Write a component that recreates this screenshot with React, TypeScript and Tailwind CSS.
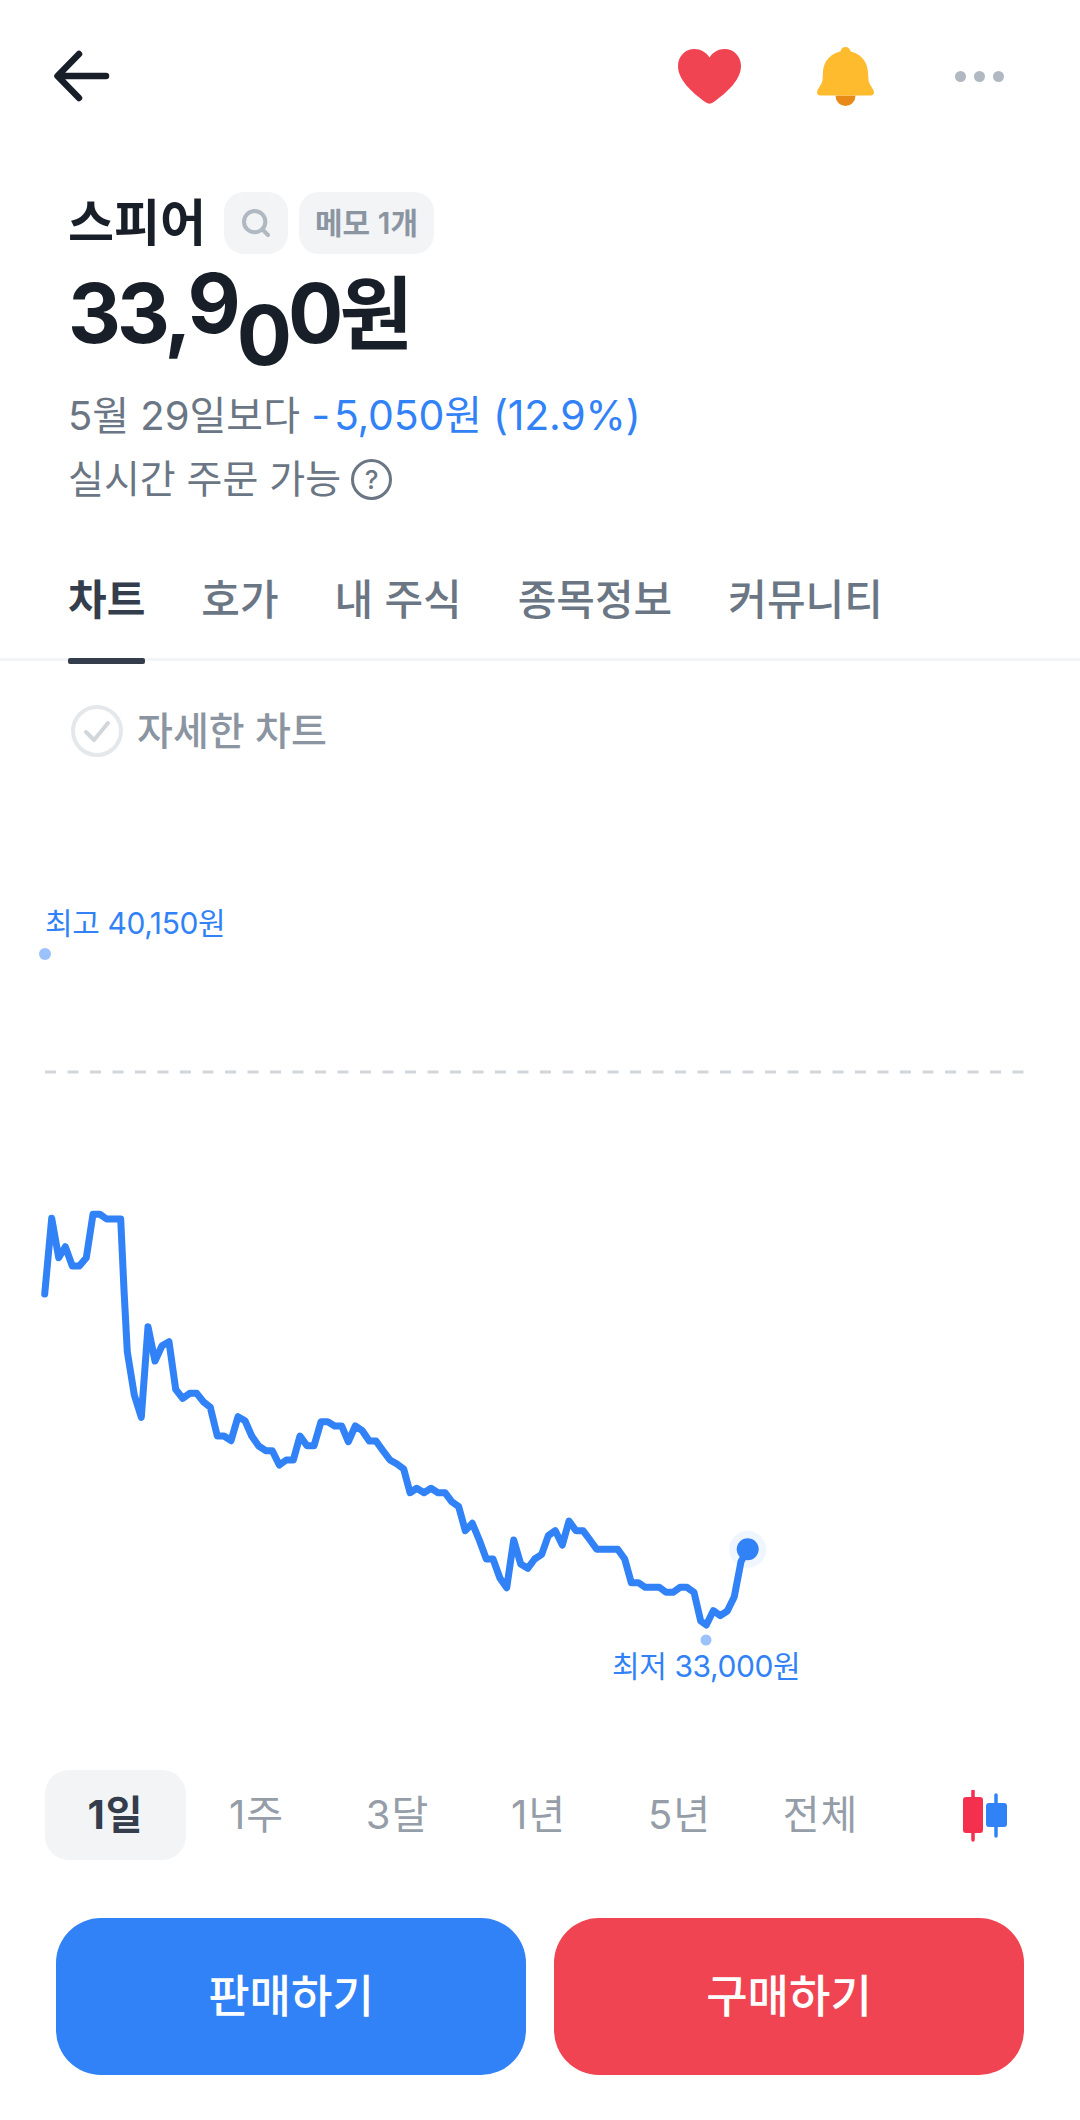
import { Search } from "lucide-react";

const tabs = ["차트", "호가", "내 주식", "종목정보", "커뮤니티"];
const periods = ["1일", "1주", "3달", "1년", "5년", "전체"];

const pricePoints =
  "44.7,1294 51.7,1218.3 58.7,1257.7 65.3,1246.7 72.3,1266 79.3,1266 86.3,1257.7 93,1214.3 100,1214.3 106.7,1219 120.7,1219 124,1290 127.3,1351.7 134.3,1395 141.3,1417.3 148,1326.7 155,1361 162,1345.7 169,1341.7 175.7,1389.3 182.7,1398.3 189.7,1393.3 196.7,1393.3 203.3,1401.7 210.3,1407.3 217.3,1436 224,1436 231,1440.7 238,1416.7 245,1420.7 251.7,1436 258.7,1446 265.7,1450.7 272.3,1450.7 279.3,1465 286.3,1460 293.3,1460 300,1436 307,1445.7 314,1445.7 321,1421.7 327.7,1421.7 334.7,1426 341.7,1426 348.3,1441.7 355.3,1426 362.3,1430.7 369.3,1441 376,1441 383,1450.7 390,1460 397,1464 403.7,1469 410,1492.7 416.7,1488.3 424,1492.7 431,1488.3 438,1492.7 445,1492.7 451.7,1501.7 458.7,1506.7 465.3,1530.7 472.3,1523.3 479.3,1540 486.3,1559 493,1559 500,1578.3 506.7,1587.7 513.7,1540 520.7,1564 527.7,1568.3 534.7,1559 541.7,1554.3 548.3,1535.7 555.3,1530.7 562.3,1545 569,1521 576,1530.7 583,1530.7 590,1540 596.7,1549.3 617.7,1549.3 624.7,1559 631.3,1582.7 638.3,1582.7 645.3,1587.3 659.3,1587.3 666,1592.3 673,1592.3 680,1587.3 687,1587.3 694,1592.3 700.7,1621 706.3,1625 713.3,1610.7 720.3,1615.7 727.3,1611 734.3,1596.7 741,1561.7 747.7,1549.3";

function Header() {
  return (
    <header className="flex h-[152px] items-center justify-between pl-[54px] pr-[76px]">
      <svg width="56" height="52" viewBox="0 0 56 52" fill="none" stroke="#191f28" strokeWidth="6.500" strokeLinecap="round" strokeLinejoin="round">
        <path d="M52 26H4M25 4 3.500 26 25 48" />
      </svg>
      <div className="flex items-center">
        <svg width="63" height="55" viewBox="0 0 63 55" fill="#f04452">
          <path d="M31.500 8.500C28 3 22.500 0 16.500 0 7 0 0 7.500 0 17c0 16 19 30 28 36.500 2 1.500 5 1.500 7 0C44 47 63 33 63 17 63 7.500 56 0 46.500 0 40.500 0 35 3 31.500 8.500Z" />
        </svg>
        <svg className="ml-[76px]" width="57" height="59" viewBox="0 0 57 59">
          <path d="M18.500 48.500a10 10.500 0 0 0 20 0Z" fill="#e88a17" />
          <circle cx="28.500" cy="5" r="5" fill="#ffbb2e" />
          <path d="M28.500 4C17 4 6.500 12 6 25l-.5 8C5 38 0 42 0 45.500 0 47.500 1.500 48.500 3.500 48.500h50c2 0 3.500-1 3.500-3 0-3.500-5-7.500-5.500-12.500l-.5-8C50.500 12 40 4 28.500 4Z" fill="#ffbb2e" />
        </svg>
        <div className="ml-[81px] flex gap-[8px]">
          <span className="h-[11px] w-[11px] rounded-full bg-[#b0b8c1]" />
          <span className="h-[11px] w-[11px] rounded-full bg-[#b0b8c1]" />
          <span className="h-[11px] w-[11px] rounded-full bg-[#b0b8c1]" />
        </div>
      </div>
    </header>
  );
}

function Summary() {
  return (
    <section className="pl-[68px] pt-[40px]">
      <div className="flex h-[62px] items-center">
        <h1 className="text-[50px] font-semibold text-[#191f28]">스피어</h1>
        <div className="ml-[18px] flex h-[62px] w-[64px] items-center justify-center rounded-[20px] bg-[#f2f4f6]">
          <Search size={32} strokeWidth={3} color="#b0b8c1" />
        </div>
        <div className="ml-[11px] flex h-[62px] items-center rounded-[20px] bg-[#f2f4f6] px-[16px] text-[30px] font-semibold text-[#8b95a1]">
          메모 1개
        </div>
      </div>
      <div className="flex h-[119px] items-center text-[82px] font-bold leading-none tracking-[-4px] text-[#191f28]">
        <span>33,</span>
        <span className="inline-block -translate-y-[10px]">9</span>
        <span className="inline-block translate-y-[22px]">0</span>
        <span>
          0<span className="text-[80px]">원</span>
        </span>
      </div>
      <p className="mt-[10px] h-[64px] text-[40px] leading-[64px] text-[#6b7684]">
        5월 29일보다{" "}
        <span className="text-[41px] tracking-[-0.2px] text-[#3182f6]">
          <span className="mr-[4px]">-</span>5,050원 (12.9%)
        </span>
      </p>
      <div className="flex h-[64px] items-center text-[39px] text-[#6b7684]">
        실시간 주문 가능
        <span className="ml-[10px] flex h-[41px] w-[41px] items-center justify-center rounded-full border-[3px] border-[#6b7684] text-[26px] font-medium">
          ?
        </span>
      </div>
    </section>
  );
}

function Tabs() {
  return (
    <nav className="mt-[30px] flex h-[120px] gap-[56px] border-b-[3px] border-[#f2f4f6] pl-[68px]">
      {tabs.map((tab, i) => (
        <div
          key={tab}
          className={
            i === 0
              ? "relative flex h-[120px] items-center pb-[3px] text-[42px] font-bold text-[#333d4b]"
              : "relative flex h-[120px] items-center pb-[3px] text-[42px] font-medium text-[#6b7684]"
          }
        >
          {tab}
          {i === 0 && <span className="absolute bottom-[-3px] left-0 h-[6px] w-full rounded-[2px] bg-[#333d4b]" />}
        </div>
      ))}
    </nav>
  );
}

function DetailToggle() {
  return (
    <div className="mb-[79px] flex h-[140px] items-center pl-[71px]">
      <svg width="52" height="52" viewBox="0 0 52 52" fill="none">
        <circle cx="26" cy="26" r="24" stroke="#e5e8eb" strokeWidth="4" />
        <path d="M15 27l8 8 14-17" stroke="#d1d6db" strokeWidth="4" strokeLinecap="round" strokeLinejoin="round" />
      </svg>
      <span className="ml-[14px] text-[39px] font-medium text-[#8b95a1]">자세한 차트</span>
    </div>
  );
}

function Chart() {
  return (
    <div className="relative h-[890px]">
      <svg className="block" width="1080" height="890" viewBox="0 880 1080 890" fill="none">
        <circle cx="45" cy="954" r="6" fill="#9cc2fb" />
        <line x1="45" y1="1072" x2="1024" y2="1072" stroke="#d1d6db" strokeWidth="3" strokeDasharray="11 11.500" />
        <circle cx="747.700" cy="1549.300" r="18.500" fill="#f0f6ff" />
        <polyline points={pricePoints} stroke="#3182f6" strokeWidth="7" strokeLinejoin="round" strokeLinecap="round" />
        <circle cx="747.700" cy="1549.300" r="11" fill="#3182f6" />
        <circle cx="706" cy="1640" r="5.500" fill="#9cc2fb" />
      </svg>
      <span className="absolute left-[45px] top-[23px] text-[30px] leading-[40px] tracking-[-0.4px] text-[#3182f6]">최고 40,150원</span>
      <span className="absolute left-[612px] top-[766px] text-[30px] leading-[40px] tracking-[-0.4px] text-[#3182f6]">최저 33,000원</span>
    </div>
  );
}

function Periods() {
  return (
    <div className="flex h-[90px] pl-[45px]">
      {periods.map((period, i) => (
        <div
          key={period}
          className={
            i === 0
              ? "flex h-[90px] w-[141px] items-center justify-center rounded-[24px] bg-[#f2f4f6] text-[40px] font-bold tracking-[1px] text-[#333d4b]"
              : "flex h-[90px] w-[141px] items-center justify-center text-[40px] tracking-[1px] text-[#949da8]"
          }
        >
          {period}
        </div>
      ))}
      <svg className="ml-[72px] mt-[20px]" width="45" height="58" viewBox="0 0 45 58" fill="none">
        <path d="M10 1v49" stroke="#f5304f" strokeWidth="3.500" strokeLinecap="round" />
        <rect x="0" y="7" width="20" height="36" rx="3" fill="#f5304f" />
        <path d="M33 5v41" stroke="#3182f6" strokeWidth="3.500" strokeLinecap="round" />
        <rect x="23" y="13" width="21" height="24" rx="3" fill="#3182f6" />
      </svg>
    </div>
  );
}

export default function App() {
  return (
    <div className="h-[2120px] w-[1080px] overflow-hidden bg-white font-['Inter','Noto_Sans_CJK_KR',sans-serif]">
      <Header />
      <Summary />
      <Tabs />
      <DetailToggle />
      <Chart />
      <Periods />
      <div className="mt-[58px] flex gap-[28px] px-[56px]">
        <button className="flex h-[157px] flex-1 items-center justify-center rounded-[45px] bg-[#3182f6] text-[45px] font-medium text-white">
          판매하기
        </button>
        <button className="flex h-[157px] flex-1 items-center justify-center rounded-[45px] bg-[#f04452] text-[45px] font-medium text-white">
          구매하기
        </button>
      </div>
    </div>
  );
}
